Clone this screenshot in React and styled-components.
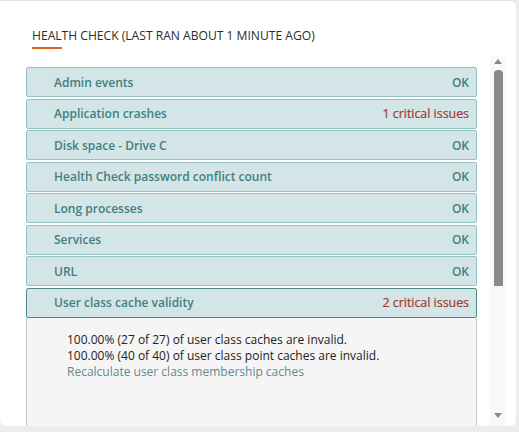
import React from 'react';
import styled, { createGlobalStyle } from 'styled-components';

const GlobalStyle = createGlobalStyle`
  html, body {
    margin: 0;
    padding: 0;
    background: #ececec;
  }
  body {
    font-family: 'Open Sans', 'Liberation Sans', sans-serif;
  }
`;

const Card = styled.section`
  width: 516px;
  height: 426px;
  background: #FFFFFF;
  border-radius: 0 6px 6px 6px;
  border-top: 1px solid #e4e4e4;
  box-sizing: border-box;
  overflow: hidden;
  display: flex;
  flex-direction: column;
`;

const Header = styled.div`
  padding: 27px 0 0 32px;
  height: 28px;
`;

const Title = styled.h2`
  margin: 0;
  font-size: 12.1px;
  line-height: 16px;
  font-weight: 400;
  color: #2b2b2b;
`;

const Underline = styled.div`
  width: 30px;
  height: 2px;
  margin-top: 3px;
  background: #e0631d;
`;

const Body = styled.div`
  display: flex;
  flex: 1;
  padding-left: 26px;
  min-height: 0;
`;

const List = styled.div`
  width: 451px;
  padding-top: 11px;
  overflow: hidden;
`;

const Row = styled.div`
  display: flex;
  align-items: center;
  justify-content: space-between;
  height: 30px;
  box-sizing: border-box;
  margin-bottom: 1.57px;
  padding: 0 7px 0 27px;
  background: #d3e5e7;
  border: 1px solid ${p => (p.open ? '#4f8c88' : '#93c2c3')};
  border-radius: 2px;
  font-size: 12px;
  font-weight: 600;
  color: #418080;
`;

const Status = styled.span`
  color: ${p => (p.critical ? '#a3372a' : '#418080')};
  font-size: ${p => (p.critical ? '12.4px' : '12px')};
  font-weight: ${p => (p.critical ? 400 : 600)};
  -webkit-text-stroke: ${p => (p.critical ? '0.2px #a3372a' : '0')};
`;

const Details = styled.div`
  height: 120px;
  margin-top: -1.5px;
  background: #f5f5f5;
  border-left: 1px solid #c9c9c9;
  border-right: 1px solid #c9c9c9;
  padding: 14px 0 0 40px;
  font-size: 12px;
  line-height: 16px;
  color: #222222;
`;

const Link = styled.div`
  color: #5c8b90;
`;

const ScrollBar = styled.div`
  width: 16px;
  margin-left: 13px;
  background: #f8f8f8;
  display: flex;
  flex-direction: column;
  align-items: center;
  padding-top: 3px;
`;

const Arrow = styled.div`
  width: 0;
  height: 0;
  border-left: 4.5px solid transparent;
  border-right: 4.5px solid transparent;
  ${p => (p.down
    ? 'border-top: 5px solid #8a8a8a;'
    : 'border-bottom: 5px solid #8a8a8a;')}
`;

const Thumb = styled.div`
  width: 9px;
  height: 216px;
  margin-top: 6px;
  background: #8a8a8a;
  border-radius: 4px 4px 0 0;
`;

const Spacer = styled.div`
  flex: 1;
`;

const BottomGap = styled.div`
  height: 8px;
`;

const checks = [
  { name: 'Admin events', status: 'OK' },
  { name: 'Application crashes', status: '1 critical issues', critical: true },
  { name: 'Disk space - Drive C', status: 'OK' },
  { name: 'Health Check password conflict count', status: 'OK' },
  { name: 'Long processes', status: 'OK' },
  { name: 'Services', status: 'OK' },
  { name: 'URL', status: 'OK' },
  { name: 'User class cache validity', status: '2 critical issues', critical: true, open: true },
];

export default function App() {
  return (
    <>
      <GlobalStyle />
      <Card>
        <Header>
          <Title>HEALTH CHECK (LAST RAN ABOUT 1 MINUTE AGO)</Title>
          <Underline />
        </Header>
        <Body>
          <List>
            {checks.map(c => (
              <React.Fragment key={c.name}>
                <Row open={c.open}>
                  <span>{c.name}</span>
                  <Status critical={c.critical}>{c.status}</Status>
                </Row>
                {c.open && (
                  <Details>
                    <div>100.00% (27 of 27) of user class caches are invalid.</div>
                    <div>100.00% (40 of 40) of user class point caches are invalid.</div>
                    <Link>Recalculate user class membership caches</Link>
                  </Details>
                )}
              </React.Fragment>
            ))}
          </List>
          <ScrollBar>
            <Arrow />
            <Thumb />
            <Spacer />
            <Arrow down />
            <BottomGap />
          </ScrollBar>
        </Body>
      </Card>
    </>
  );
}
